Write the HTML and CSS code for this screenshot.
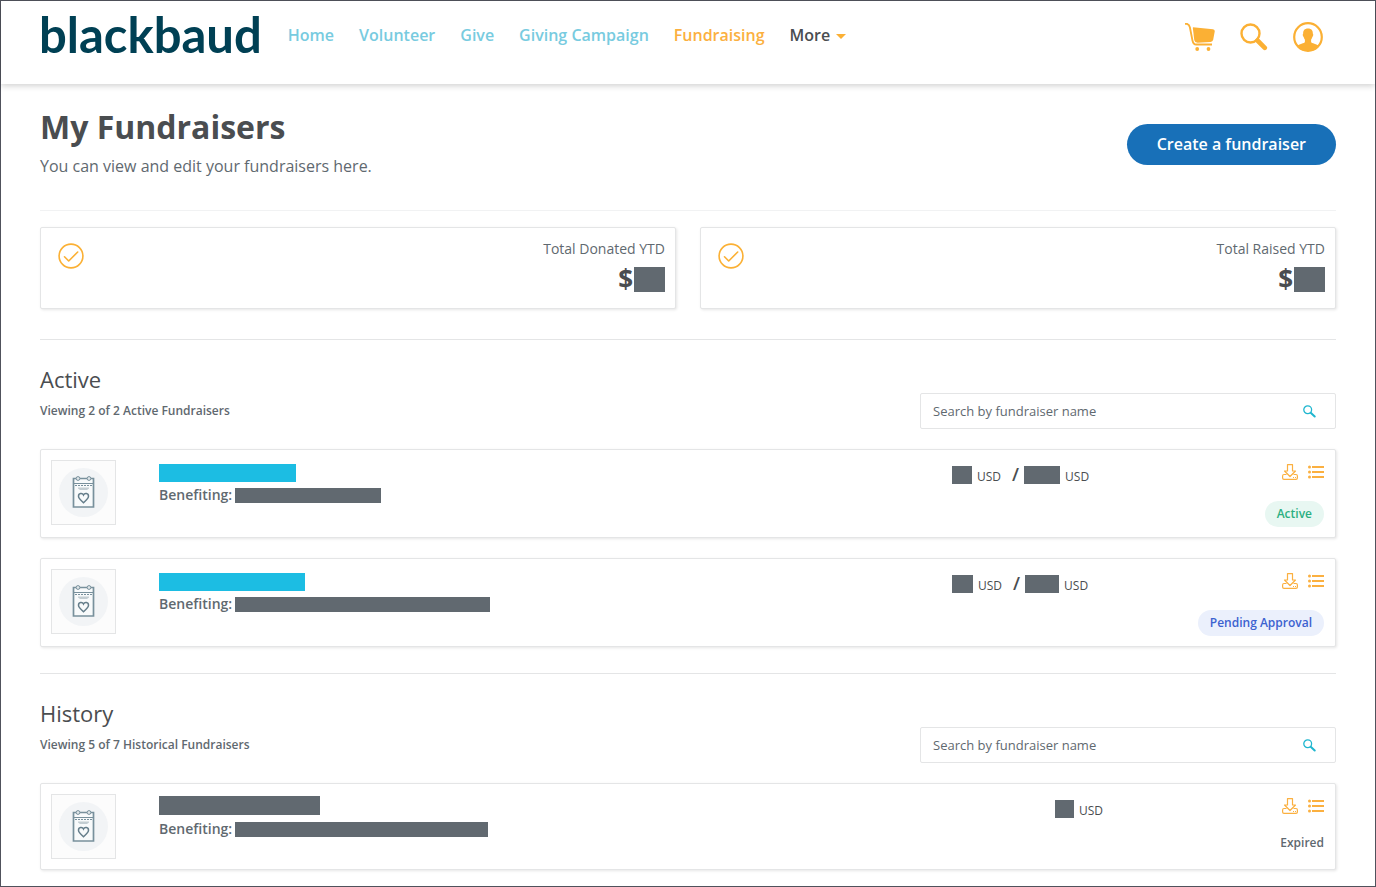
FILE: index.html
```html
<!DOCTYPE html>
<html lang="en">
<head>
<meta charset="utf-8">
<title>My Fundraisers</title>
<meta name="viewport" content="width=device-width, initial-scale=1">
<link rel="stylesheet" href="styles.css">
</head>
<body>
<svg class="sprite" aria-hidden="true">
  <symbol id="i-cart" viewBox="0 0 30 28">
    <path d="M0 .8h1.600q2.600.4 3.300 3.600l2.600 13.200q.8 3.900 3.600 3.900H27" fill="none" stroke="currentColor" stroke-width="1.900"/>
    <path d="M8 4.200 28 6.300q2 .3 1.700 2.200l-1.500 8.200q-.5 2.100-2.700 2.300l-13 .7q-2.700 0-3.200-2.400L7.800 5z" fill="currentColor"/>
    <circle cx="12.200" cy="26" r="1.900" fill="currentColor"/><circle cx="23.500" cy="26" r="1.900" fill="currentColor"/>
  </symbol>
  <symbol id="i-search" viewBox="0 0 28 28">
    <circle cx="10.500" cy="10.500" r="9" fill="none" stroke="currentColor" stroke-width="2.400"/>
    <path d="m17.500 17.500 7.300 7.300" fill="none" stroke="currentColor" stroke-width="4.600" stroke-linecap="round" stroke-linejoin="round"/>
  </symbol>
  <symbol id="i-user" viewBox="0 0 30 30">
    <circle cx="15" cy="15" r="13.800" fill="none" stroke="currentColor" stroke-width="2.200"/>
    <path d="M15 6.500c3.600 0 5 2.300 4.800 5 .8.700.5 2.700-.5 3.500-.3 1.400-.8 2-1.200 2.600v2.200c0 2 6.200 1.600 7.900 4.700C23.500 27.500 19.500 29 15 29S6.500 27.500 4 24.500c1.700-3.100 7.900-2.700 7.900-4.700v-2.200c-.4-.6-.9-1.200-1.200-2.600-1-.8-1.300-2.800-.5-3.500-.2-2.700 1.200-5 4.800-5z" fill="currentColor"/>
  </symbol>
  <symbol id="i-check" viewBox="0 0 26 26">
    <g fill="none" stroke="currentColor" stroke-width="1.600" stroke-linecap="round" stroke-linejoin="round"><circle cx="13" cy="13" r="11.900"/><path d="m6.500 13.800 4.200 4.200 9-9"/></g>
  </symbol>
  <symbol id="i-find" viewBox="0 0 13 13">
    <circle cx="4.700" cy="4.700" r="3.900" fill="none" stroke="currentColor" stroke-width="1.300"/>
    <path d="m7.700 7.700 4 3.800" fill="none" stroke="currentColor" stroke-width="2" stroke-linecap="round"/>
  </symbol>
  <symbol id="i-download" viewBox="0 0 16 16">
    <g fill="none" stroke="currentColor" stroke-width="1.200" stroke-linejoin="round"><path d="M5.500.6h5V7h3L8 12.500 2.500 7h3z"/><path d="M4.500 10.500H2q-1.400 0-1.400 1.500v2q0 1.400 1.400 1.400h12q1.400 0 1.400-1.400v-2q0-1.500-1.400-1.500h-2.500"/></g>
    <path d="M11 13h1v1h-1zM13 13h1v1h-1z" fill="currentColor"/>
  </symbol>
  <symbol id="i-list" viewBox="0 0 16 14">
    <path d="M4 1h12v2H4zM4 6h12v2H4zM4 11h12v2H4z" fill="currentColor"/>
    <g fill="currentColor"><circle cx="1.500" cy="2" r="1.500"/><circle cx="1.500" cy="7" r="1.500"/><circle cx="1.500" cy="12" r="1.500"/></g>
  </symbol>
  <symbol id="i-event" viewBox="0 0 49 49">
    <circle cx="24.500" cy="24.500" r="24.500" fill="#f2f4f6"/>
    <path d="M14.500 10.500h20v28.500h-20z" fill="#f8fafb" stroke="#78909c" stroke-width="1.700"/>
    <path d="M15 15.500h19" stroke="#78909c"/><path d="M16 17.500h17" stroke="#78909c" stroke-dasharray="2 1"/>
    <path d="M19 19.500h11v1l-2 1.500h-7l-2-1.500z" fill="#c3cdd2"/>
    <g fill="#dfe5e8" stroke="#78909c"><circle cx="19" cy="10.500" r="1.900"/><circle cx="30" cy="10.500" r="1.900"/></g>
    <path d="M24.500 34.700C22 32.300 19.500 30.500 19.500 28.200c0-3.200 3.900-3.600 5-1.200 1.100-2.400 5-2 5 1.200 0 2.300-2.500 4.100-5 6.500z" fill="none" stroke="#647d8a" stroke-width="1.500"/>
  </symbol>
</svg>

<div class="page">
  <header class="topbar">
    <a class="logo" href="#">blackbaud</a>
    <nav class="nav" aria-label="Main">
      <a href="#">Home</a>
      <a href="#">Volunteer</a>
      <a href="#">Give</a>
      <a href="#">Giving Campaign</a>
      <a href="#" class="current" aria-current="page">Fundraising</a>
      <button type="button" class="more">More <span class="caret"></span></button>
    </nav>
    <div class="tools">
      <button type="button" aria-label="Cart"><svg class="ico-cart"><use href="#i-cart"/></svg></button>
      <button type="button" aria-label="Search"><svg class="ico-search"><use href="#i-search"/></svg></button>
      <button type="button" aria-label="Account"><svg class="ico-user"><use href="#i-user"/></svg></button>
    </div>
  </header>

  <main class="content">
    <div class="intro">
      <div>
        <h1>My Fundraisers</h1>
        <p>You can view and edit your fundraisers here.</p>
      </div>
      <button type="button" class="create">Create a fundraiser</button>
    </div>

    <div class="totals">
      <div class="card total">
        <svg class="ico-check"><use href="#i-check"/></svg>
        <div class="total-text"><span class="label">Total Donated YTD</span><span class="sum">$<span class="mask mask-sum"></span></span></div>
      </div>
      <div class="card total">
        <svg class="ico-check"><use href="#i-check"/></svg>
        <div class="total-text"><span class="label">Total Raised YTD</span><span class="sum">$<span class="mask mask-sum"></span></span></div>
      </div>
    </div>

    <section class="group">
      <div class="group-head">
        <div>
          <h2>Active</h2>
          <p>Viewing 2 of 2 Active Fundraisers</p>
        </div>
        <div class="search">
          <input type="text" aria-label="Search active fundraisers" placeholder="Search by fundraiser name">
          <button type="button" aria-label="Search"><svg class="ico-find"><use href="#i-find"/></svg></button>
        </div>
      </div>

      <article class="card row">
        <div class="thumb"><svg><use href="#i-event"/></svg></div>
        <div class="info">
          <a class="mask name" href="#" aria-label="Fundraiser" style="width:137px"></a>
          <div class="benefit">Benefiting: <span class="mask" style="width:146px"></span></div>
        </div>
        <div class="amount"><span class="mask" style="width:20px"></span><span class="cur">USD</span><span class="slash">/</span><span class="mask" style="width:36px"></span><span class="cur">USD</span></div>
        <div class="side">
          <div class="actions"><button type="button" aria-label="Download"><svg class="ico-download"><use href="#i-download"/></svg></button><button type="button" aria-label="Details"><svg class="ico-list"><use href="#i-list"/></svg></button></div>
          <span class="badge active">Active</span>
        </div>
      </article>

      <article class="card row">
        <div class="thumb"><svg><use href="#i-event"/></svg></div>
        <div class="info">
          <a class="mask name" href="#" aria-label="Fundraiser" style="width:146px"></a>
          <div class="benefit">Benefiting: <span class="mask" style="width:255px"></span></div>
        </div>
        <div class="amount"><span class="mask" style="width:21px"></span><span class="cur">USD</span><span class="slash">/</span><span class="mask" style="width:34px"></span><span class="cur">USD</span></div>
        <div class="side">
          <div class="actions"><button type="button" aria-label="Download"><svg class="ico-download"><use href="#i-download"/></svg></button><button type="button" aria-label="Details"><svg class="ico-list"><use href="#i-list"/></svg></button></div>
          <span class="badge pending">Pending Approval</span>
        </div>
      </article>
    </section>

    <section class="group">
      <div class="group-head">
        <div>
          <h2>History</h2>
          <p>Viewing 5 of 7 Historical Fundraisers</p>
        </div>
        <div class="search">
          <input type="text" aria-label="Search historical fundraisers" placeholder="Search by fundraiser name">
          <button type="button" aria-label="Search"><svg class="ico-find"><use href="#i-find"/></svg></button>
        </div>
      </div>

      <article class="card row past">
        <div class="thumb"><svg><use href="#i-event"/></svg></div>
        <div class="info">
          <span class="mask name" style="width:161px"></span>
          <div class="benefit">Benefiting: <span class="mask" style="width:253px"></span></div>
        </div>
        <div class="amount"><span class="mask" style="width:19px"></span><span class="cur">USD</span></div>
        <div class="side">
          <div class="actions"><button type="button" aria-label="Download"><svg class="ico-download"><use href="#i-download"/></svg></button><button type="button" aria-label="Details"><svg class="ico-list"><use href="#i-list"/></svg></button></div>
          <span class="badge expired">Expired</span>
        </div>
      </article>
    </section>
  </main>
</div>
</body>
</html>
```

FILE: styles.css
```css
* { box-sizing: border-box; }

body {
  margin: 0;
  font-family: "Open Sans", "Noto Sans", sans-serif;
  font-size: 16px;
  color: #5f6970;
  background: #fff;
}

h1, h2, p { margin: 0; }
a { text-decoration: none; }
svg { display: block; }
.sprite { position: absolute; width: 0; height: 0; }

button {
  padding: 0;
  border: 0;
  background: none;
  font: inherit;
  color: inherit;
  cursor: pointer;
}

.page {
  min-height: 100vh;
  border: 1px solid #50525c;
}

/* Header */
.topbar {
  display: flex;
  align-items: flex-start;
  height: 83px;
  padding: 0 52px 0 38px;
  box-shadow: 0 2px 6px rgba(0, 0, 0, 0.18);
}

.logo {
  margin-top: 5px;
  font-family: Lato, sans-serif;
  font-size: 49px;
  font-weight: 700;
  line-height: 56px;
  color: #004054;
}

.nav {
  display: flex;
  align-items: center;
  gap: 25px;
  margin: 22px 0 0 26px;
  font-weight: 600;
  line-height: 24px;
}

.nav a { color: #78cbe0; }
.nav .current { color: #fbb040; }
.more { display: flex; align-items: center; gap: 6px; color: #4a4d50; }
.caret { border: 5px solid transparent; border-top-color: #fbb034; border-bottom: 0; margin-top: 3px; }

.tools {
  display: flex;
  align-items: center;
  gap: 25px;
  margin: 21px 0 0 auto;
  color: #fbb034;
}

.ico-cart { width: 30px; height: 28px; }
.ico-search { width: 28px; height: 28px; }
.ico-user { width: 30px; height: 30px; }

/* Page intro */
.content { padding: 23px 39px 16px; }

.intro {
  display: flex;
  justify-content: space-between;
  align-items: flex-start;
  padding-bottom: 32px;
  border-bottom: 1px solid #f1f2f3;
}

h1 {
  font-size: 32px;
  font-weight: 700;
  line-height: 40px;
  color: #4a4d50;
}

.intro p { margin-top: 7px; line-height: 24px; }

.create {
  margin-top: 17px;
  padding: 0 30px;
  border-radius: 21px;
  background: #1870b8;
  color: #fff;
  font-weight: 600;
  line-height: 41px;
}

.card {
  border: 1px solid #e4e5e6;
  border-radius: 2px;
  background: #fff;
  box-shadow: 1px 1px 3px rgba(0, 0, 0, 0.1);
}

.mask {
  display: inline-block;
  background: #616970;
}

/* Year totals */
.totals {
  display: grid;
  grid-template-columns: 1fr 1fr;
  gap: 24px;
  padding: 16px 0 30px;
}

.total {
  display: flex;
  justify-content: space-between;
  align-items: flex-start;
  min-height: 82px;
  padding: 11px 10px 0 17px;
}

.ico-check { width: 26px; height: 26px; margin-top: 4px; color: #fbb034; }
.total-text { display: flex; flex-direction: column; align-items: flex-end; }
.label { font-size: 14px; line-height: 20px; }

.sum {
  display: flex;
  align-items: center;
  gap: 1px;
  margin-top: 4px;
  font-size: 26px;
  font-weight: 700;
  line-height: 32px;
  color: #4a4d50;
}

.mask-sum { width: 31px; height: 25px; }

/* Fundraiser groups */
.group {
  padding-bottom: 26px;
  border-top: 1px solid #e4e5e6;
}

.group:last-child { padding-bottom: 0; }

.group-head {
  display: flex;
  justify-content: space-between;
  align-items: flex-end;
  padding: 23px 0 20px;
}

h2 {
  font-size: 22px;
  font-weight: 400;
  line-height: 32px;
  color: #4a4d50;
}

.group-head p {
  margin: 6px 0 8px;
  font-size: 12px;
  font-weight: 600;
  line-height: 20px;
}

.search {
  display: flex;
  align-items: center;
  width: 416px;
  height: 36px;
  padding: 0 19px 0 12px;
  border: 1px solid #e4e5e6;
  border-radius: 2px;
}

.search input {
  flex: 1;
  min-width: 0;
  padding: 0;
  border: 0;
  outline: 0;
  background: none;
  font: inherit;
  font-size: 13px;
  line-height: 20px;
}

.search input::placeholder { color: #5f6970; opacity: 1; }
.ico-find { width: 13px; height: 13px; color: #1fb6cf; }

.row {
  display: grid;
  grid-template-columns: 65px minmax(0, 1fr) 245px 127px;
  min-height: 89px;
  padding: 10px 11px 10px 10px;
}

.row + .row { margin-top: 20px; }

.past {
  grid-template-columns: 65px minmax(0, 1fr) 142px 127px;
  min-height: 87px;
}

.thumb {
  display: grid;
  place-items: center;
  width: 65px;
  height: 65px;
  border: 1px solid #e4e5e6;
  background: #fcfcfc;
}

.thumb svg { width: 49px; height: 49px; }

.info { padding: 4px 0 0 43px; }
.name { display: block; height: 18px; }
a.name { background: #1cbde3; }
.past .info { padding-top: 2px; }
.past .name { height: 19px; }

.benefit {
  display: flex;
  align-items: center;
  gap: 3px;
  margin-top: 3px;
  font-size: 14px;
  font-weight: 600;
  line-height: 20px;
}

.past .benefit { margin-top: 4px; }
.benefit .mask { height: 15px; margin-top: 1px; }

.amount {
  display: flex;
  align-items: flex-end;
  height: 26px;
  gap: 5px;
  padding-bottom: 1px;
  color: #4a4d50;
}

.amount .mask { height: 18px; margin-bottom: 1px; }
.cur { font-size: 12px; font-weight: 500; line-height: 16px; }
.slash { padding-left: 6px; font-size: 18px; font-weight: 600; line-height: 22px; }

.side {
  display: flex;
  flex-direction: column;
  justify-content: space-between;
  align-items: flex-end;
  padding-top: 4px;
}

.actions { display: flex; align-items: center; gap: 10px; color: #fbb040; }
.ico-download { width: 16px; height: 16px; }
.ico-list { width: 16px; height: 14px; }

.badge {
  padding: 0 12px;
  border-radius: 13px;
  font-size: 12px;
  font-weight: 600;
  line-height: 26px;
}

.active { background: #e8f7f2; color: #2bb081; }
.pending { background: #ebf0fc; color: #3c62d0; }
.expired { padding: 0; line-height: 32px; }
```
